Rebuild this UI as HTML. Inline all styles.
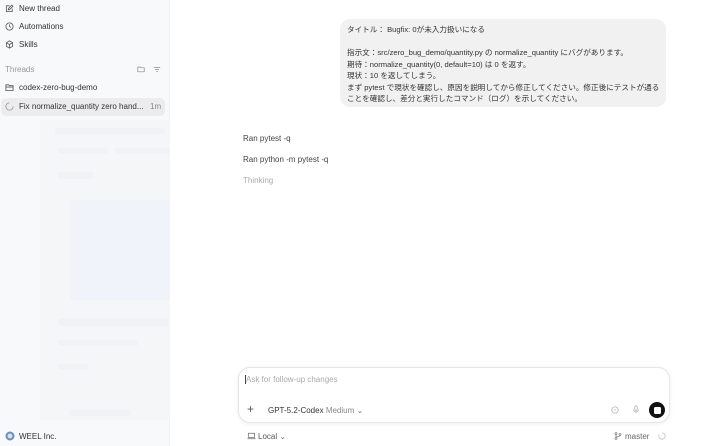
<!DOCTYPE html>
<html><head><meta charset="utf-8"><style>
*{margin:0;padding:0;box-sizing:border-box}
body{width:720px;height:446px;overflow:hidden;background:#fff;font-family:"Liberation Sans","Noto Sans CJK JP",sans-serif;color:#222;position:relative}
.sb{position:absolute;left:0;top:0;width:170px;height:446px;background:#f8f9fa;border-right:1px solid #eef0f2}
.t{position:absolute;font-size:8px;white-space:nowrap}
.g{position:absolute;background:#f0f2f5;border-radius:2px}
.gb{position:absolute;background:#f0f3fa;border-radius:2px}
</style></head><body>
<div class="sb">
<div class="g" style="left:40px;top:120px;width:130px;height:300px;background:#f5f6f8"></div>
<div class="g" style="left:55px;top:128px;width:110px;height:6px"></div>
<div class="g" style="left:58px;top:148px;width:50px;height:6px"></div>
<div class="g" style="left:115px;top:148px;width:55px;height:6px"></div>
<div class="g" style="left:58px;top:172px;width:35px;height:7px"></div>
<div class="gb" style="left:70px;top:200px;width:100px;height:100px"></div>
<div class="g" style="left:58px;top:318px;width:110px;height:8px"></div>
<div class="g" style="left:58px;top:340px;width:80px;height:6px"></div>
<div class="g" style="left:58px;top:364px;width:30px;height:6px"></div>
<div class="g" style="left:70px;top:410px;width:60px;height:6px"></div>
<svg style="position:absolute;left:5px;top:4px" width="9" height="9" viewBox="0 0 10 10" fill="none" stroke="#555" stroke-width="0.9"><path d="M8 5v3.5H1.5V2H5"/><path d="M7.5 1.2l1.3 1.3L5 6.3 3.6 6.5l.2-1.4z"/></svg>
<div class="t" style="left:19px;top:4px;color:#333">New thread</div>
<svg style="position:absolute;left:5px;top:22px" width="9" height="9" viewBox="0 0 10 10" fill="none" stroke="#555" stroke-width="0.9"><circle cx="5" cy="5" r="4"/><path d="M5 2.7V5l1.5 1"/></svg>
<div class="t" style="left:19px;top:22px;color:#333">Automations</div>
<svg style="position:absolute;left:5px;top:40px" width="9" height="9" viewBox="0 0 10 10" fill="none" stroke="#555" stroke-width="0.9"><path d="M5 1l3.5 2v4L5 9 1.5 7V3z"/><path d="M1.5 3L5 5l3.5-2M5 5v4"/></svg>
<div class="t" style="left:19px;top:40px;color:#333">Skills</div>
<div class="t" style="left:5px;top:65px;color:#999">Threads</div>
<svg style="position:absolute;left:137px;top:65px" width="8" height="8" viewBox="0 0 10 10" fill="none" stroke="#888" stroke-width="0.9"><path d="M1 2.5h3l1 1h4v5H1z"/></svg>
<svg style="position:absolute;left:153px;top:65px" width="8" height="8" viewBox="0 0 10 10" fill="none" stroke="#888" stroke-width="0.9"><path d="M1 3h8M2.5 5.5h5M4 8h2"/></svg>
<svg style="position:absolute;left:5px;top:83px" width="9" height="9" viewBox="0 0 10 10" fill="none" stroke="#555" stroke-width="0.9"><path d="M1 2h3l1 1h4v5.5H1z"/><path d="M1 4.5h8"/></svg>
<div class="t" style="left:19px;top:83px;color:#333">codex-zero-bug-demo</div>
<div style="position:absolute;left:1px;top:98px;width:164px;height:18px;background:#ececee;border-radius:5px"></div>
<svg style="position:absolute;left:5px;top:102px" width="9" height="9" viewBox="0 0 10 10" fill="none" stroke="#999" stroke-width="0.9"><path d="M5 1A4 4 0 1 0 9 5"/></svg>
<div class="t" style="left:19px;top:102px;color:#333">Fix normalize_quantity zero hand...</div>
<div class="t" style="left:150px;top:102px;color:#888">1m</div>
<svg style="position:absolute;left:5px;top:431px" width="10" height="10" viewBox="0 0 10 10"><circle cx="5" cy="5" r="4.5" fill="#6a8fb8"/><circle cx="5" cy="5" r="2.5" fill="#cfe0ee"/></svg>
<div class="t" style="left:19px;top:432px;color:#333">WEEL Inc.</div>
</div>

<div style="position:absolute;left:340px;top:19px;width:326px;height:88px;background:#f1f1f1;border-radius:10px"></div>
<div class="t" style="left:347px;top:24px;line-height:11.5px;font-size:7.6px;color:#333">タイトル： Bugfix: 0が未入力扱いになる<br><br>指示文：src/zero_bug_demo/quantity.py の normalize_quantity にバグがあります。<br>期待：normalize_quantity(0, default=10) は 0 を返す。<br>現状：10 を返してしまう。<br>まず pytest で現状を確認し、原因を説明してから修正してください。修正後にテストが通る<br>ことを確認し、差分と実行したコマンド（ログ）を示してください。</div>

<div class="t" style="left:243px;top:134px;color:#444">Ran pytest -q</div>
<div class="t" style="left:243px;top:155px;color:#444">Ran python -m pytest -q</div>
<div class="t" style="left:243px;top:176px;color:#aaa">Thinking</div>

<div style="position:absolute;left:238px;top:367px;width:432px;height:56px;border:1px solid #e6e6e6;border-radius:12px;box-shadow:0 1px 4px rgba(0,0,0,.07);background:#fff"></div>
<div style="position:absolute;left:245px;top:375px;width:1px;height:9px;background:#444"></div>
<div class="t" style="left:246px;top:375px;color:#aaa">Ask for follow-up changes</div>
<div class="t" style="left:247px;top:402px;color:#555;font-size:12px">+</div>
<div class="t" style="left:268px;top:406px;color:#333">GPT-5.2-Codex <span style="color:#888">Medium</span> <span style="color:#777">⌄</span></div>
<svg style="position:absolute;left:611px;top:406px" width="8" height="8" viewBox="0 0 10 10" fill="none" stroke="#aaa" stroke-width="0.9"><circle cx="5" cy="5" r="4"/><path d="M3.5 5h3"/></svg>
<svg style="position:absolute;left:632px;top:405px" width="8" height="9" viewBox="0 0 10 11" fill="none" stroke="#aaa" stroke-width="0.9"><rect x="3.5" y="1" width="3" height="5.5" rx="1.5"/><path d="M2 5.5a3 3 0 0 0 6 0M5 8.5V10"/></svg>
<div style="position:absolute;left:649px;top:402px;width:16px;height:16px;border-radius:50%;background:#111"></div>
<div style="position:absolute;left:653.5px;top:406.5px;width:7px;height:7px;border-radius:1.5px;background:#fff"></div>
<svg style="position:absolute;left:247px;top:432px" width="9" height="8" viewBox="0 0 10 8" fill="none" stroke="#777" stroke-width="0.9"><rect x="1.5" y="1" width="7" height="4.5"/><path d="M0.5 7h9"/></svg>
<div class="t" style="left:258px;top:432px;color:#555">Local <span style="color:#777">⌄</span></div>
<svg style="position:absolute;left:614px;top:432px" width="8" height="8" viewBox="0 0 10 10" fill="none" stroke="#777" stroke-width="0.9"><circle cx="2.5" cy="2" r="1.2"/><circle cx="2.5" cy="8" r="1.2"/><circle cx="7.5" cy="3" r="1.2"/><path d="M2.5 3.2v3.6M7.5 4.2c0 2-5 1.5-5 2.6"/></svg>
<div class="t" style="left:625px;top:432px;color:#666">master</div>
<svg style="position:absolute;left:658px;top:432px" width="8" height="8" viewBox="0 0 10 10" fill="none" stroke="#bbb" stroke-width="0.9"><path d="M5 1A4 4 0 1 1 1.5 3"/></svg>
</body></html>
